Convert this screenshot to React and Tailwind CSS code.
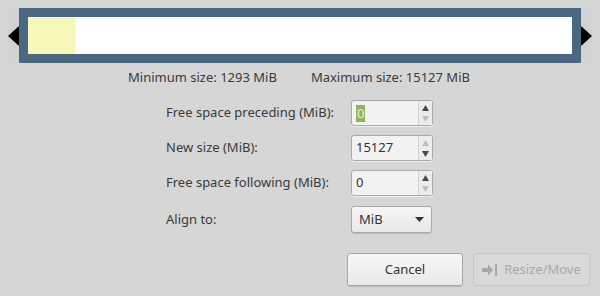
import React from "react";

function Spin({ value, selected, upOn, downOn }) {
  return (
    <div className="flex h-[26px] w-[82px] rounded-[3px] border border-[#a9a9a9] bg-[#f2f2f2] shadow-[0_1px_0_rgba(255,255,255,0.6)]">
      <div className="flex flex-1 items-center pl-[4px]">
        {selected ? (
          <span className="bg-[#8fb35f] px-[1px] leading-[17px] text-[#e8f2d8]">{value}</span>
        ) : (
          <span className="text-[#333]">{value}</span>
        )}
      </div>
      <div className="flex w-[14px] flex-col items-center justify-center gap-[5px] border-l border-[#d2d2d2] bg-[#ececec]">
        <svg width="7" height="6" viewBox="0 0 7 6">
          <path d="M3.5 0 L7 6 L0 6 Z" fill={upOn ? "#4a4a4a" : "#bdbdbd"} />
        </svg>
        <svg width="7" height="6" viewBox="0 0 7 6">
          <path d="M0 0 L7 0 L3.5 6 Z" fill={downOn ? "#4a4a4a" : "#bdbdbd"} />
        </svg>
      </div>
    </div>
  );
}

export default function App() {
  return (
    <div
      className="h-[296px] w-[600px] bg-[#d6d6d6] text-[13px] text-[#3a3a3a]"
      style={{ fontFamily: '"Noto Sans", sans-serif' }}
    >
      <div className="px-[8px] pt-[8px]">
        <div className="flex h-[55px] items-center bg-[#d2d2d2]">
          <svg width="11" height="20" viewBox="0 0 11 20">
            <path d="M11 0 L0 10 L11 20 Z" fill="#000" />
          </svg>
          <div className="h-[55px] flex-1 bg-[#4b6882] p-[9px]">
            <div className="flex h-full bg-white">
              <div className="w-[47px] bg-[#f6f7b8]" />
            </div>
          </div>
          <svg width="11" height="20" viewBox="0 0 11 20">
            <path d="M0 0 L11 10 L0 20 Z" fill="#000" />
          </svg>
        </div>
      </div>
      <div className="mt-[6px] flex h-[17px] items-center pl-[128px] text-[13px] leading-[17px]">
        <span>Minimum size: 1293 MiB</span>
        <span className="ml-[34px]">Maximum size: 15127 MiB</span>
      </div>
      <div className="mt-[14px] grid grid-cols-[185px_82px] gap-y-[9px] pl-[166px]">
        <div className="flex items-center">Free space preceding (MiB):</div>
        <Spin value="0" selected upOn downOn={false} />
        <div className="flex items-center">New size (MiB):</div>
        <Spin value="15127" upOn={false} downOn />
        <div className="flex items-center">Free space following (MiB):</div>
        <Spin value="0" upOn downOn={false} />
        <div className="mt-[1px] flex items-center">Align to:</div>
        <div className="mt-[1px] flex h-[27px] w-[81px] items-center justify-between rounded-[3px] border border-[#a9a9a9] bg-gradient-to-b from-[#f6f6f6] to-[#e8e8e8] px-[7px] shadow-[0_1px_1px_rgba(0,0,0,0.15)]">
          <span className="text-[#333]">MiB</span>
          <svg width="9" height="5" viewBox="0 0 9 5">
            <path d="M0 0 L9 0 L4.5 5 Z" fill="#333" />
          </svg>
        </div>
      </div>
      <div className="mt-[20px] flex justify-end gap-[10px] pr-[10px]">
        <button className="flex h-[33px] w-[116px] items-center justify-center rounded-[3px] border border-[#a9a9a9] bg-gradient-to-b from-[#f7f7f7] to-[#e9e9e9] text-[#333] shadow-[0_1px_1px_rgba(0,0,0,0.15)]">
          Cancel
        </button>
        <button className="flex h-[33px] w-[117px] items-center justify-center gap-[6px] rounded-[3px] border border-[#c6c6c6] bg-[#d9d9d9] text-[#a9a9a9]">
          <svg width="16" height="12" viewBox="0 0 16 12">
            <path d="M0 4 H6 V0.5 L11 6 L6 11.5 V8 H0 Z" fill="#a6a6a6" />
            <rect x="13" y="0" width="2" height="12" fill="#a6a6a6" />
          </svg>
          <span>Resize/Move</span>
        </button>
      </div>
    </div>
  );
}
